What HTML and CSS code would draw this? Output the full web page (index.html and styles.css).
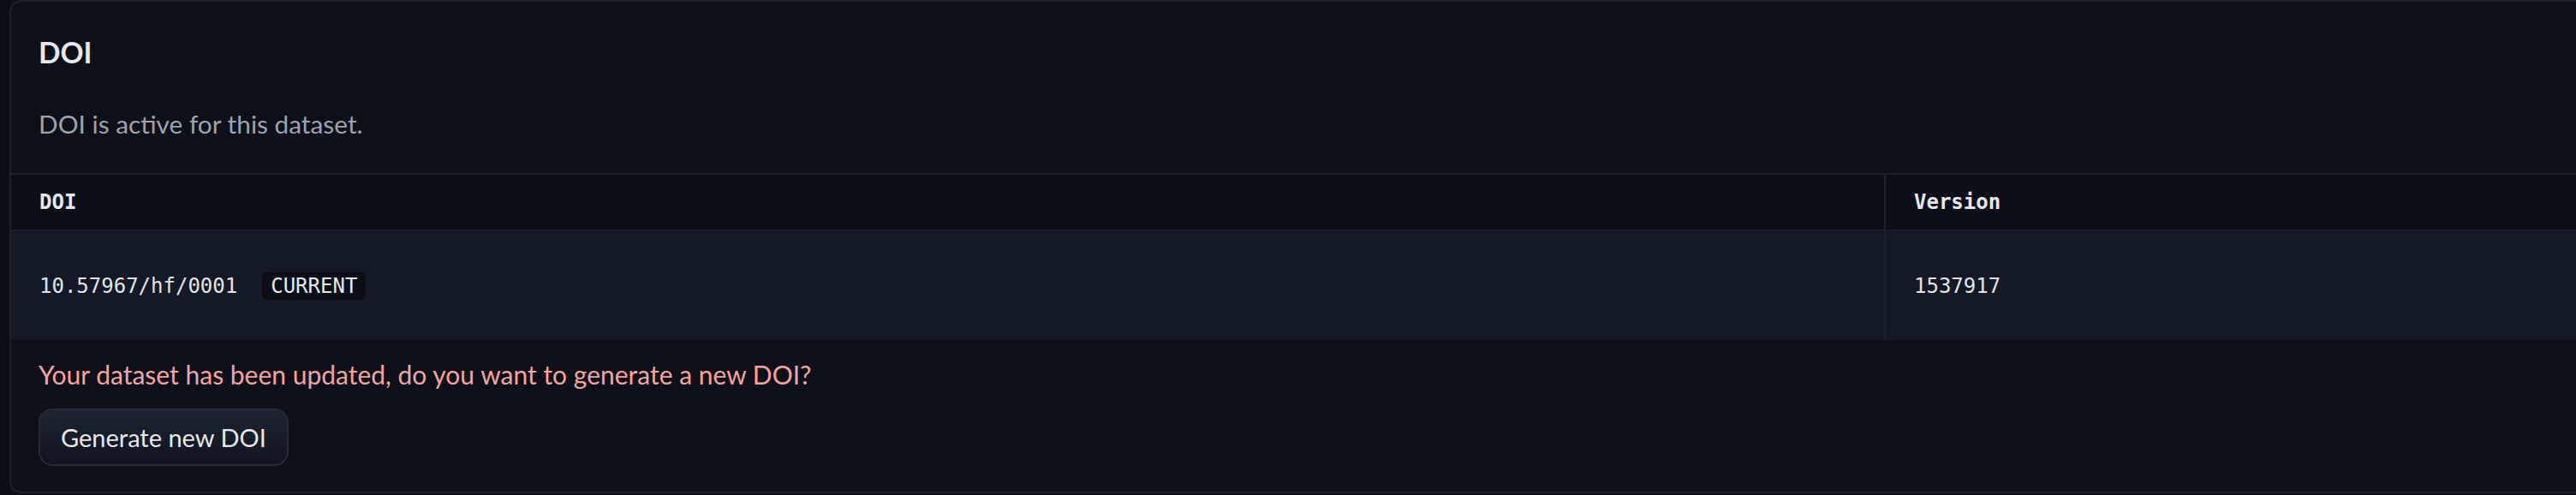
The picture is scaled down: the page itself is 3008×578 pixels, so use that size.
FILE: index.html
```html
<!DOCTYPE html>
<html lang="en">
<head>
<meta charset="utf-8">
<title>DOI</title>
<link rel="stylesheet" href="styles.css">
</head>
<body>
<div class="card">
  <div class="head">
    <h3 class="title">DOI</h3>
    <p class="desc">DOI is active for this dataset.</p>
  </div>
  <table class="doi-table">
    <colgroup><col class="col-doi"><col></colgroup>
    <thead>
      <tr><th>DOI</th><th>Version</th></tr>
    </thead>
    <tbody>
      <tr>
        <td><span class="doi">10.57967/hf/0001</span><span class="badge">CURRENT</span></td>
        <td>1537917</td>
      </tr>
    </tbody>
  </table>
  <div class="foot">
    <p class="warn">Your dataset has been updated, do you want to generate a new DOI?</p>
    <button class="btn" type="button">Generate new DOI</button>
  </div>
</div>
</body>
</html>
```

FILE: styles.css
```css
html, body {
  margin: 0;
  background: #0b0e17;
  overflow: hidden;
}
body {
  padding: 0 0 0 11px;
  font-family: Lato, "Liberation Sans", sans-serif;
}
.card {
  box-sizing: border-box;
  width: 3100px;
  border: 2px solid #1c2130;
  border-radius: 14px;
  background: #0d1018;
  overflow: hidden;
}
.head {
  padding: 35px 32px 35px 32px;
}
.title {
  margin: 0;
  font-size: 33.5px;
  line-height: 48px;
  font-weight: 700;
  color: #e5e7eb;
}
.desc {
  margin: 38px 0 0;
  font-size: 29.8px;
  line-height: 44px;
  color: #9ca3af;
}
.doi-table {
  width: 100%;
  border-collapse: separate;
  border-spacing: 0;
  table-layout: fixed;
}
.col-doi {
  width: 2187px;
}
.doi-table th {
  padding: 16px 33px;
  border-top: 2px solid #1c2130;
  text-align: left;
  font-family: "DejaVu Sans Mono", "Liberation Mono", monospace;
  font-weight: 700;
  font-size: 24px;
  line-height: 32px;
  color: #e5e7eb;
  background: #0c0f17;
}
.doi-table td {
  height: 127px;
  padding: 0 33px;
  border-top: 2px solid #1a1f2d;
  vertical-align: middle;
  background: #131926;
  font-family: "DejaVu Sans Mono", "Liberation Mono", monospace;
  font-size: 24px;
  line-height: 32px;
  color: #e2e4ea;
}
.doi-table th + th,
.doi-table td + td {
  border-left: 2px solid #1c2130;
}
.badge {
  display: inline-block;
  margin-left: 29px;
  padding: 0 10px;
  border-radius: 6px;
  background: #0b0e16;
  line-height: 32px;
  color: #e5e7eb;
}
.foot {
  padding: 18px 32px 30px;
}
.warn {
  margin: 0;
  font-size: 30px;
  line-height: 44px;
  color: #f4a3a3;
}
.btn {
  display: block;
  box-sizing: border-box;
  margin-top: 18px;
  height: 67px;
  padding: 0 24px;
  border: 2px solid #232a3a;
  border-radius: 16px;
  background: linear-gradient(#1e2433, #10141f);
  color: #e5e7eb;
  font-family: Lato, "Liberation Sans", sans-serif;
  font-size: 29px;
  line-height: 1;
}
```
